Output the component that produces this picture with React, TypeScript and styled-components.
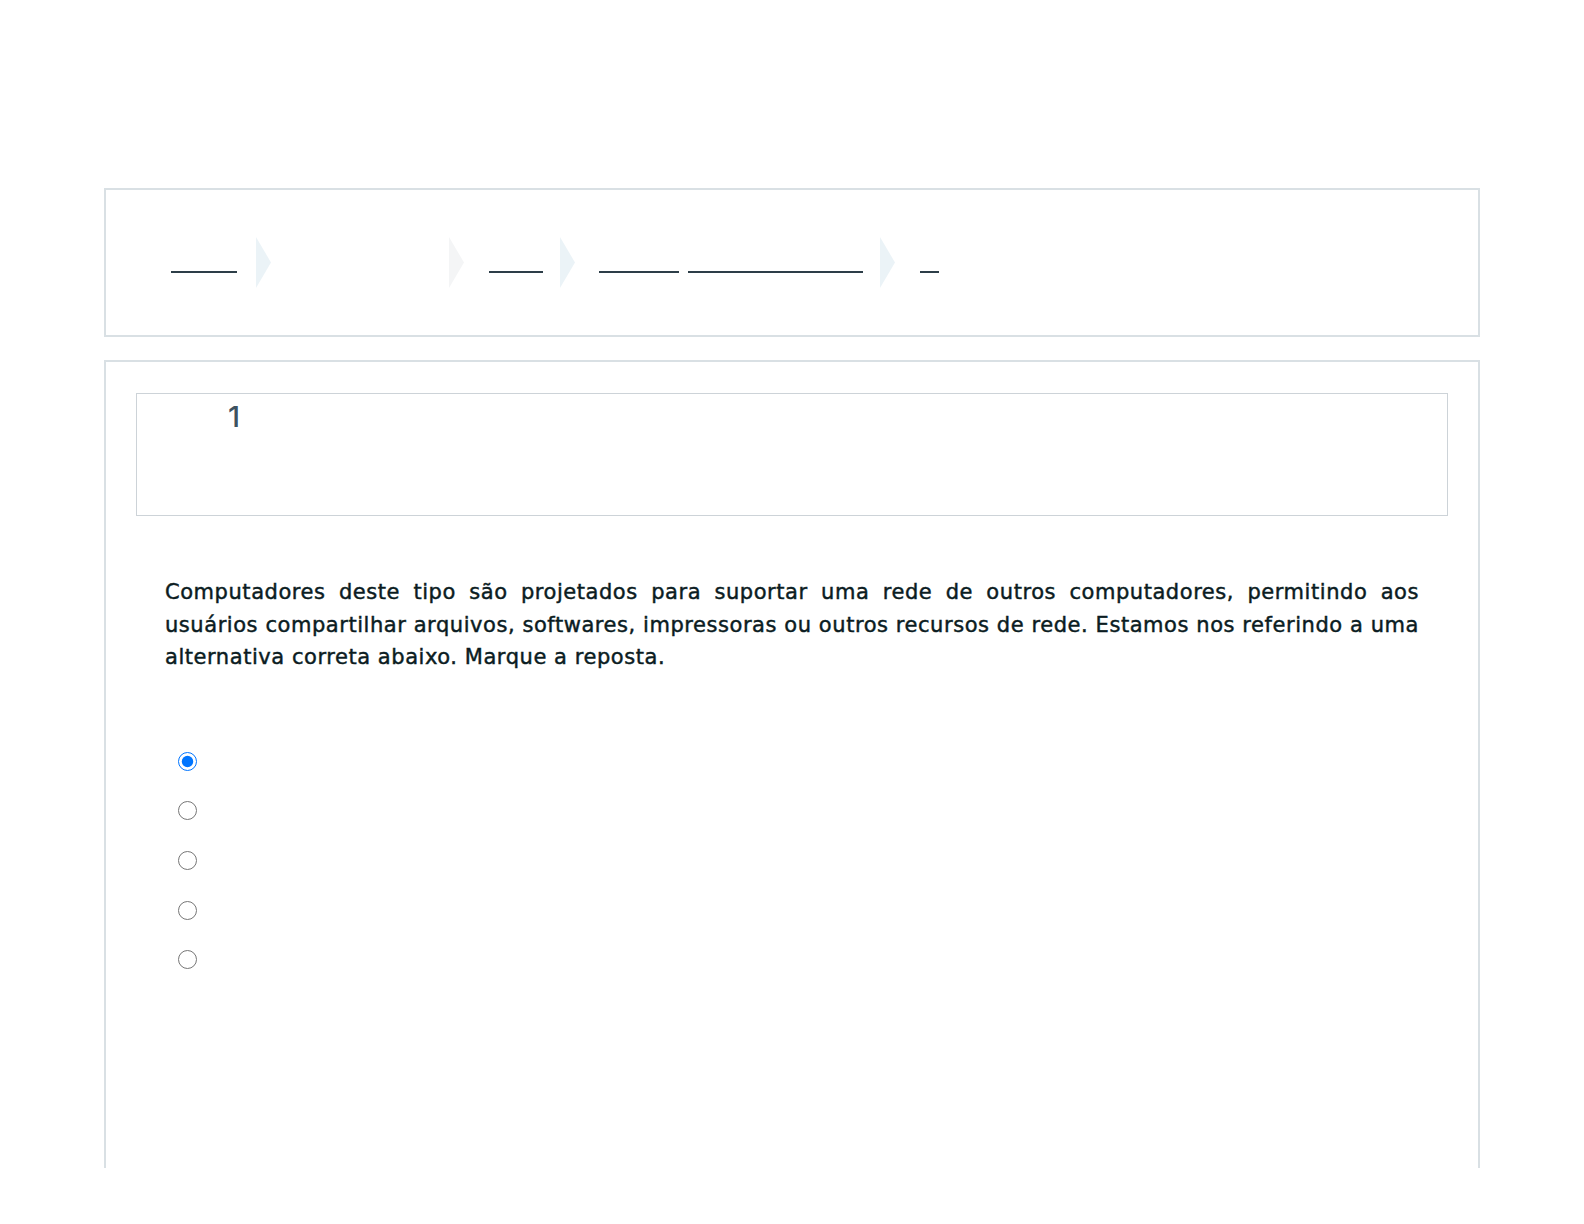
import React from "react";
import styled, { createGlobalStyle } from "styled-components";

const Global = createGlobalStyle`
  html, body { margin: 0; padding: 0; background: #ffffff; }
  body { font-family: "Inter", "Open Sans", "Liberation Sans", sans-serif; color: #0d1f26; }
  * { box-sizing: border-box; }
`;

const Page = styled.div`
  width: 1376px;
  margin: 0 auto;
  padding-top: 188px;
  display: flex;
  flex-direction: column;
  gap: 23px;
`;

const Card = styled.section<{ $open?: boolean }>`
  background: #fff;
  border: 2px solid #d9e0e4;
  ${(p) => (p.$open ? "border-bottom: none;" : "")}
`;

const HeaderCard = styled(Card)`
  height: 149px;
  padding: 0 0 0 65px;
  display: flex;
  align-items: center;
`;

const Crumbs = styled.nav`
  display: flex;
  align-items: center;
  height: 51px;
`;

const CrumbLine = styled.span<{ $w: number; $ml?: number }>`
  display: block;
  width: ${(p) => p.$w}px;
  height: 2px;
  margin-top: 18px;
  margin-left: ${(p) => p.$ml ?? 0}px;
  background: #2d3e48;
`;

const Chevron = styled.span<{ $muted?: boolean; $ml: number }>`
  display: block;
  width: 15px;
  height: 51px;
  margin-left: ${(p) => p.$ml}px;
  background: ${(p) => (p.$muted ? "#f4f5f6" : "#ebf3f7")};
  clip-path: polygon(0 0, 100% 50%, 0 100%);
`;

const QuestionCard = styled(Card)`
  height: 808px;
  padding: 31px 30px 0 30px;
`;

const NumberBox = styled.div`
  height: 123px;
  border: 1px solid #cdd3d8;
  padding: 6px 0 0 91px;
`;

const Number = styled.span`
  font-size: 29px;
  font-weight: 500;
  line-height: 1.2;
  color: #3e5260;
`;

const Statement = styled.p`
  margin: 60px 29px 0 29px;
  font-family: "DejaVu Sans", "Inter", sans-serif;
  font-size: 21px;
  font-weight: 400;
  line-height: 32.5px;
  letter-spacing: 0.55px;
  color: #0b1c22;
  -webkit-text-stroke: 0.45px #0b1c22;
`;

const Line = styled.span<{ $last?: boolean }>`
  display: block;
  text-align: ${(p) => (p.$last ? "left" : "justify")};
  text-align-last: ${(p) => (p.$last ? "left" : "justify")};
`;

const Options = styled.div`
  margin: 63px 0 0 42px;
  display: flex;
  flex-direction: column;
`;

const Option = styled.label`
  height: 49.6px;
  display: flex;
  align-items: center;
`;

const Radio = styled.input`
  width: 19px;
  height: 19px;
  margin: 0;
`;

const statementLines = [
  "Computadores deste tipo são projetados para suportar uma rede de outros computadores, permitindo aos",
  "usuários compartilhar arquivos, softwares, impressoras ou outros recursos de rede. Estamos nos referindo a uma",
  "alternativa correta abaixo. Marque a reposta.",
];

export default function App() {
  return (
    <>
      <Global />
      <Page>
        <HeaderCard>
          <Crumbs aria-label="breadcrumb">
            <CrumbLine $w={66} />
            <Chevron $ml={19} />
            <Chevron $ml={178} $muted />
            <CrumbLine $w={54} $ml={25} />
            <Chevron $ml={17} />
            <CrumbLine $w={80} $ml={24} />
            <CrumbLine $w={175} $ml={9} />
            <Chevron $ml={17} />
            <CrumbLine $w={19} $ml={25} />
          </Crumbs>
        </HeaderCard>
        <QuestionCard $open>
          <NumberBox>
            <Number>1</Number>
          </NumberBox>
          <Statement>
            {statementLines.map((t, i) => (
              <Line key={i} $last={i === statementLines.length - 1}>
                {t}
              </Line>
            ))}
          </Statement>
          <Options role="radiogroup">
            {[0, 1, 2, 3, 4].map((i) => (
              <Option key={i}>
                <Radio type="radio" name="resposta" defaultChecked={i === 0} />
              </Option>
            ))}
          </Options>
        </QuestionCard>
      </Page>
    </>
  );
}
